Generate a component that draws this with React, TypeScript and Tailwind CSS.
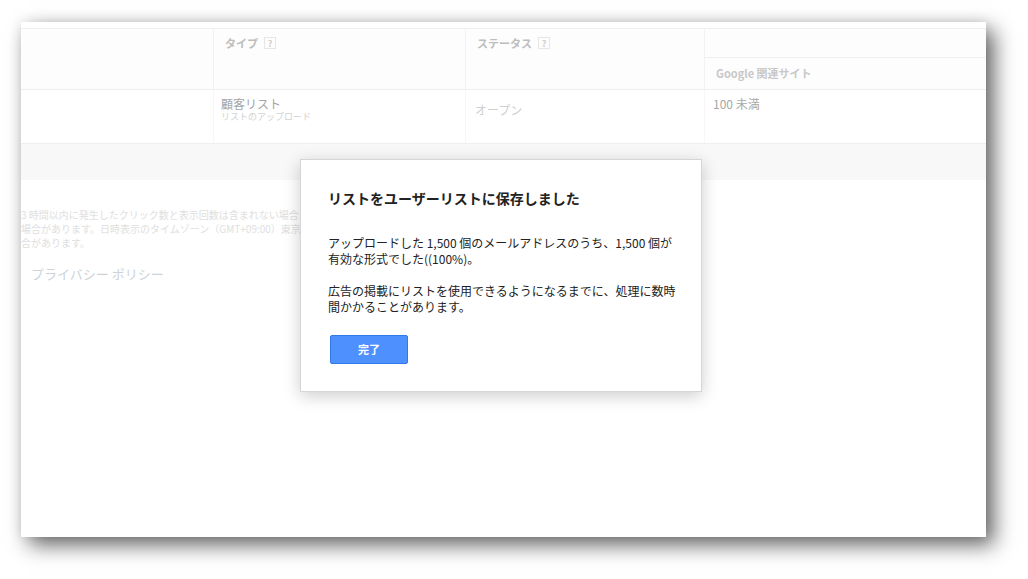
import React from "react";

const jp = "font-['Noto_Sans_CJK_JP','Noto_Sans',sans-serif]";

const HelpBox = () => (
  <span className="ml-[6px] inline-flex h-[12px] w-[12px] items-center justify-center border border-[#e6e6e6] text-[9px] leading-none text-[#cfcfcf]">
    ?
  </span>
);

export default function App() {
  return (
    <div className={`h-[579px] w-[1028px] overflow-hidden bg-white pl-[21px] pt-[22px] ${jp}`}>
      <div className="relative h-[515px] w-[965px] bg-white shadow-[8px_8px_20px_rgba(0,0,0,0.6),0_0_12px_rgba(0,0,0,0.08)]">
        <div className="h-[7px] border-b border-[#f0f0f0]" />

        {/* header row */}
        <div className="flex h-[61px] border-b border-[#eeeeee] bg-[#fdfdfd]">
          <div className="w-[193px] border-r border-[#f2f2f2]" />
          <div className="w-[252px] border-r border-[#f2f2f2] pl-[11px] pt-[6px]">
            <div className="flex items-center text-[11px] font-bold text-[#bdbdbd]">
              タイプ
              <HelpBox />
            </div>
          </div>
          <div className="w-[239px] border-r border-[#f2f2f2] pl-[11px] pt-[6px]">
            <div className="flex items-center text-[11px] font-bold text-[#bdbdbd]">
              ステータス
              <HelpBox />
            </div>
          </div>
          <div className="flex flex-1 flex-col">
            <div className="h-[29px] border-b border-[#f0f0f0]" />
            <div className="flex flex-1 items-center pl-[11px] text-[11px] font-bold text-[#c8c8c8]">
              Google 関連サイト
            </div>
          </div>
        </div>

        {/* data row */}
        <div className="flex h-[54px] border-b border-[#eeeeee]">
          <div className="w-[193px] border-r border-[#f7f7f7]" />
          <div className="w-[252px] border-r border-[#f7f7f7] pl-[7px] pt-[6px]">
            <div className="text-[12px] leading-[15px] text-[#a4a4a4]">顧客リスト</div>
            <div className="text-[9px] leading-[12px] text-[#d2d2d2]">リストのアップロード</div>
          </div>
          <div className="w-[239px] border-r border-[#f7f7f7] pl-[9px] pt-[11px] text-[12px] text-[#cfcfcf]">
            オープン
          </div>
          <div className="flex-1 pl-[8px] pt-[5px] text-[12px] text-[#a8a8a8]">100 未満</div>
        </div>

        {/* gray band */}
        <div className="h-[36px] bg-[#f8f8f8]" />

        {/* footer text */}
        <div className="overflow-hidden whitespace-nowrap pt-[28px] text-[10px] leading-[14px] text-[#e0e0e0]">
          <div>3 時間以内に発生したクリック数と表示回数は含まれない場合</div>
          <div>場合があります。日時表示のタイムゾーン（GMT+09:00）東京</div>
          <div>合があります。</div>
        </div>
        <div className="pl-[10px] pt-[14px] text-[13px] text-[#cbd4db]">プライバシー ポリシー</div>

        {/* dialog */}
        <div className="absolute left-[279px] top-[137px] h-[233px] w-[402px] border border-[#d6d6d6] bg-white px-[27px] pt-[28px] shadow-[0_4px_16px_rgba(0,0,0,0.2)]">
          <div className="whitespace-nowrap text-[14px] font-bold leading-[20px] text-[#222222]">
            リストをユーザーリストに保存しました
          </div>
          <div className="mt-[27px] whitespace-nowrap text-[12px] leading-[16px] text-[#222222]">
            <p>
              アップロードした 1,500 個のメールアドレスのうち、1,500 個が
              <br />
              有効な形式でした((100%)。
            </p>
            <p className="mt-[16px]">
              広告の掲載にリストを使用できるようになるまでに、処理に数時
              <br />
              間かかることがあります。
            </p>
          </div>
          <button className="ml-[2px] mt-[20px] flex h-[29px] w-[78px] items-center justify-center rounded-[2px] border border-[#3079ed] bg-[#4d90fe] text-[11px] font-bold text-white">
            完了
          </button>
        </div>
      </div>
    </div>
  );
}
